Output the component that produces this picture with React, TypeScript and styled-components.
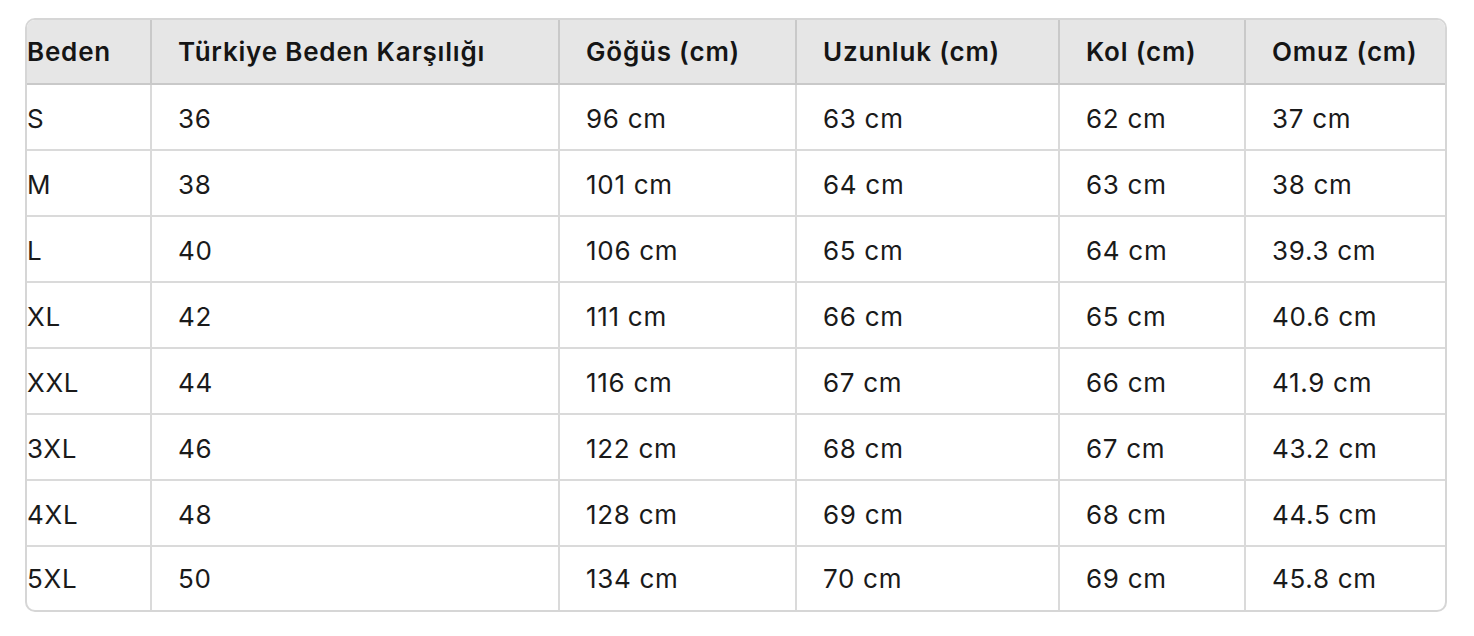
import React from "react";
import styled, { createGlobalStyle } from "styled-components";

const Global = createGlobalStyle`
  html, body { margin: 0; padding: 0; background: #ffffff; }
  body { font-family: Inter, "Liberation Sans", Arial, sans-serif; color: #1a1a1a; }
`;

const Page = styled.div`
  padding: 18px 27px 0 25px;
`;

const Frame = styled.div`
  width: 1422px;
  box-sizing: border-box;
  border: 2px solid #d6d6d6;
  border-radius: 10px;
  overflow: hidden;
`;

const Table = styled.table`
  width: 100%;
  border-collapse: separate;
  border-spacing: 0;
  table-layout: fixed;
`;

const Head = styled.th<{ $first?: boolean; $last?: boolean }>`
  background: #e6e6e6;
  height: 65px;
  box-sizing: border-box;
  padding: 0 0 0 ${(p) => (p.$first ? "0" : "26px")};
  text-align: left;
  font-size: 26px;
  font-weight: 600;
  letter-spacing: 0.8px;
  color: #151515;
  border-bottom: 2px solid #c9c9c9;
  border-right: ${(p) => (p.$last ? "none" : "2px solid #c9c9c9")};
  white-space: nowrap;
`;

const Cell = styled.td<{ $first?: boolean; $last?: boolean; $lastRow?: boolean }>`
  height: ${(p) => (p.$lastRow ? "63px" : "66px")};
  box-sizing: border-box;
  padding: ${(p) => (p.$lastRow ? "0" : "2px")} 0 0 ${(p) => (p.$first ? "0" : "26px")};
  font-size: 26px;
  font-weight: 400;
  letter-spacing: 0.7px;
  color: #1a1a1a;
  border-bottom: ${(p) => (p.$lastRow ? "none" : "2px solid #dadada")};
  border-right: ${(p) => (p.$last ? "none" : "2px solid #dadada")};
  white-space: nowrap;
`;

const widths = [125, 408, 237, 263, 186, 199];
const headers = ["Beden", "Türkiye Beden Karşılığı", "Göğüs (cm)", "Uzunluk (cm)", "Kol (cm)", "Omuz (cm)"];
const rows = [
  ["S", "36", "96 cm", "63 cm", "62 cm", "37 cm"],
  ["M", "38", "101 cm", "64 cm", "63 cm", "38 cm"],
  ["L", "40", "106 cm", "65 cm", "64 cm", "39.3 cm"],
  ["XL", "42", "111 cm", "66 cm", "65 cm", "40.6 cm"],
  ["XXL", "44", "116 cm", "67 cm", "66 cm", "41.9 cm"],
  ["3XL", "46", "122 cm", "68 cm", "67 cm", "43.2 cm"],
  ["4XL", "48", "128 cm", "69 cm", "68 cm", "44.5 cm"],
  ["5XL", "50", "134 cm", "70 cm", "69 cm", "45.8 cm"],
];

export default function App() {
  return (
    <Page>
      <Global />
      <Frame>
        <Table>
          <colgroup>
            {widths.map((w, i) => (
              <col key={i} style={{ width: w }} />
            ))}
          </colgroup>
          <thead>
            <tr>
              {headers.map((h, i) => (
                <Head key={h} $first={i === 0} $last={i === headers.length - 1}>
                  {h}
                </Head>
              ))}
            </tr>
          </thead>
          <tbody>
            {rows.map((r, ri) => (
              <tr key={r[0]}>
                {r.map((c, ci) => (
                  <Cell
                    key={ci}
                    $first={ci === 0}
                    $last={ci === r.length - 1}
                    $lastRow={ri === rows.length - 1}
                  >
                    {c}
                  </Cell>
                ))}
              </tr>
            ))}
          </tbody>
        </Table>
      </Frame>
    </Page>
  );
}
